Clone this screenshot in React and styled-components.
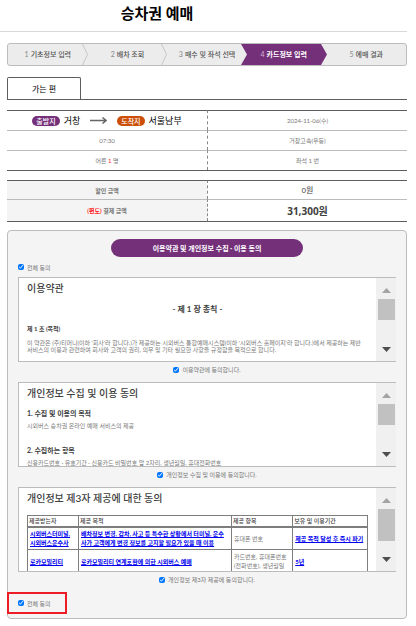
import React, {useRef} from 'react';
import styled, {createGlobalStyle, ThemeProvider} from 'styled-components';

const theme = {
    font: {
        family: 'Lato, "Noto Sans CJK KR", sans-serif',
    },
    color: {
        primary: '#74317a',
        arrival: '#cc4e08',
        dark: '#5d5d5d',
        line: '#bcbcbc',
        panel: '#f4f4f4',
        text: '#404040',
        muted: '#777777',
        link: '#0000ee',
        red: '#ee1c25',
    },
};

const GlobalStyle = createGlobalStyle`
    *{
        box-sizing:border-box;
    }
    body{
        margin:0px;
        background-color:white;
        color:${theme.color.text};
        font-family:${theme.font.family};
        font-size:6px;
        line-height:7px;
    }
    h1, h2, h3, h4, p, ol{
        margin:0px;
        padding:0px;
    }
    button{
        font-family:inherit;
    }
`;

const Page = styled.div`
    padding-right:9px;
`;
const Header = styled.header`
    display:flex;
    justify-content:center;
    padding-right:93px;
    height:32px;
    border-bottom:1px solid #d8d8d8;
`;
const Title = styled.h1`
    color:black;
    font-size:15px;
    line-height:27px;
    font-weight:700;
`;
const Main = styled.main`
    display:flex;
    flex-direction:column;
    padding:11px 0px 7px 7px;
`;

const StepList = styled.ol`
    display:flex;
    height:23px;
    list-style:none;
    overflow:hidden;
    background-color:#ececec;
    border:1px solid ${props => props.theme.color.line};
    border-radius:3px;
`;
const Step = styled.li`
    display:flex;
    flex:none;
    width:18.5%;
    align-items:center;
    justify-content:center;
    gap:2px;
    padding-left:${props => props.$active ? '0px' : '6px'};
    white-space:nowrap;
    font-size:7px;
    font-weight:${props => props.$active ? 700 : 500};
    color:${props => props.$active ? 'white' : '#555555'};
    background-color:${props => props.$active ? props.theme.color.primary : 'transparent'};
    &:last-child{
        flex:1;
        padding-left:0px;
    }
`;
const StepNumber = styled.span`
    font-weight:400;
    color:${props => props.$active ? '#d3b4d6' : '#888888'};
`;
const Chevron = styled.svg`
    flex:none;
    width:6px;
    height:21px;
    background-color:${props => props.$filled ? props.theme.color.primary : 'transparent'};
`;

const TabBar = styled.div`
    display:flex;
    height:23px;
    margin-top:11px;
    border-bottom:1px solid ${props => props.theme.color.dark};
`;
const Tab = styled.button`
    padding:0px 24px;
    font-size:8px;
    color:black;
    background-color:white;
    border:1px solid ${props => props.theme.color.dark};
    border-bottom:none;
    border-radius:2px 2px 0px 0px;
`;

const InfoTable = styled.table`
    width:100%;
    margin-top:10px;
    table-layout:fixed;
    border-collapse:separate;
    border-spacing:0px;
    border-bottom:1px solid ${props => props.theme.color.dark};
    text-align:center;
    & th, & td{
        height:20px;
        padding:0px;
        font-weight:400;
        color:${props => props.theme.color.muted};
        border-top:1px solid ${props => props.theme.color.line};
    }
    & tr:first-child > *{
        border-top-color:${props => props.theme.color.dark};
    }
    & td:last-child{
        border-left:1px dashed #888888;
    }
`;
const FareTable = styled(InfoTable)`
    margin-top:9px;
    & th, & td{
        height:22px;
    }
    & tr:first-child > *{
        height:19px;
    }
`;
const FareHead = styled.th`
    background-color:${props => props.theme.color.panel};
    && {
        font-weight:700;
    }
`;
const Route = styled.div`
    display:flex;
    align-items:center;
    justify-content:center;
    gap:4px;
    font-size:9px;
    line-height:12px;
    color:black;
`;
const Tag = styled.span`
    padding:0px 4px;
    border-radius:5px;
    font-size:7px;
    line-height:10px;
    font-weight:500;
    color:white;
    background-color:${props => props.$arrival ? props.theme.color.arrival : props.theme.color.primary};
`;
const RouteArrow = styled.svg`
    width:17px;
    height:7px;
    margin:0px 6px;
`;
const Red = styled.span`
    color:#ff2020;
`;
const Amount = styled.span`
    font-family:"Open Sans", "Noto Sans CJK KR", sans-serif;
    font-size:${props => props.$total ? '10px' : '8px'};
    line-height:12px;
    font-weight:${props => props.$total ? 700 : 400};
    color:${props => props.theme.color.text};
`;

const Panel = styled.section`
    display:flex;
    flex-direction:column;
    margin-top:8px;
    padding:8px 10px 4px 10px;
    background-color:${props => props.theme.color.panel};
    border:1px solid ${props => props.theme.color.line};
    border-radius:4px;
`;
const PanelTitle = styled.h2`
    align-self:center;
    width:51%;
    border-radius:9px;
    font-size:7px;
    line-height:18px;
    font-weight:700;
    text-align:center;
    color:white;
    background-color:${props => props.theme.color.primary};
`;
const CheckLabel = styled.label`
    display:flex;
    align-items:center;
    gap:3px;
    color:${props => props.theme.color.muted};
`;
const Checkbox = styled.input`
    width:6px;
    height:6px;
    margin:0px;
    accent-color:#0075ff;
`;
const AllRow = styled.div`
    display:flex;
    align-items:center;
    height:20px;
`;
const AgreeRow = styled.div`
    display:flex;
    align-items:center;
    justify-content:center;
    height:15px;
    margin-bottom:5px;
`;
const MarkedRow = styled.div`
    display:flex;
    align-self:flex-start;
    align-items:center;
    height:22px;
    margin-left:-11px;
    padding:0px 14px 0px 9px;
    border:2px solid ${props => props.theme.color.red};
`;

const TermsFrame = styled.div`
    display:flex;
    height:85px;
    background-color:white;
    border:1px solid ${props => props.theme.color.line};
    border-right:none;
`;
const TermsText = styled.div`
    flex:1;
    min-width:0px;
    padding:3px 8px 4px 8px;
    overflow:hidden;
`;
const ScrollTrack = styled.div`
    display:flex;
    flex-direction:column;
    align-items:center;
    width:20px;
    background-color:#f0f0f0;
`;
const ScrollButton = styled.button`
    display:flex;
    align-items:center;
    justify-content:center;
    width:17px;
    height:21px;
    padding:${props => props.$down ? '0px 0px 3px 0px' : '4px 0px 0px 0px'};
    border:none;
    background:none;
    color:${props => props.$down ? '#4f4f4f' : '#a3a3a3'};
`;
const ScrollThumb = styled.div`
    width:17px;
    height:${props => props.$tall ? '32px' : '21px'};
    margin-bottom:auto;
    background-color:#c1c1c1;
`;

const TermsTitle = styled.h3`
    font-size:10px;
    line-height:14px;
    font-weight:500;
`;
const Chapter = styled.h4`
    margin-top:9px;
    font-size:8px;
    line-height:10px;
    font-weight:700;
    text-align:center;
`;
const Clause = styled.h4`
    margin:11px 0px 6px 0px;
    font-size:6px;
    line-height:8px;
    font-weight:700;
`;
const Heading = styled.h4`
    margin:9px 0px 5px 0px;
    font-size:7px;
    line-height:8px;
    font-weight:700;
    p + &{
        margin-top:17px;
    }
`;
const Paragraph = styled.p`
    color:${props => props.theme.color.muted};
    word-break:keep-all;
`;

const ProvisionTable = styled.table`
    width:100%;
    margin-top:10px;
    table-layout:fixed;
    border-collapse:collapse;
    text-align:left;
    line-height:9px;
    white-space:nowrap;
    & th{
        height:11px;
        padding:0px 1px;
        font-weight:500;
        border:1px solid #7d7d7d;
        border-bottom-width:2px;
    }
    & td{
        height:23px;
        padding:1px 2px;
        color:${props => props.theme.color.muted};
        border:1px solid #7d7d7d;
    }
`;
const Strong = styled.a`
    font-weight:700;
    color:${props => props.theme.color.link};
    text-decoration:underline;
`;

const steps = ['기초정보 입력', '배차 조회', '매수 및 좌석 선택', '카드정보 입력', '예매 결과'];
const activeStep = 3;

const StepDivider = ({index}) => {
    const before = index === activeStep - 1;
    const after = index === activeStep;
    return (
        <Chevron viewBox='0 0 6 21' $filled={before} aria-hidden='true'>
            {before || after
                ? <path d='M0 0 L6 10.5 L0 21 Z' fill={after ? theme.color.primary : '#ececec'}/>
                : <path d='M0.5 0 L5.5 10.5 L0.5 21' fill='none' stroke='#c6c6c6'/>
            }
        </Chevron>
    )
}

const Steps = () => (
    <StepList>
        {steps.map((name, index) => <React.Fragment key={name}>
            <Step $active={index === activeStep}>
                <StepNumber $active={index === activeStep}>{index + 1}</StepNumber>
                {name}
            </Step>
            {index < steps.length - 1 && <StepDivider index={index}/>}
        </React.Fragment>)}
    </StepList>
)

const Check = ({label}) => (
    <CheckLabel>
        <Checkbox type='checkbox' defaultChecked/>
        {label}
    </CheckLabel>
)

const Terms = ({children, tall}) => {
    const text = useRef(null);
    const scroll = (step) => text.current.scrollBy(0, step);

    return (
        <TermsFrame>
            <TermsText ref={text}>{children}</TermsText>
            <ScrollTrack>
                <ScrollButton type='button' aria-label='위로' onClick={() => scroll(-20)}>
                    <svg width='9' height='5' viewBox='0 0 9 5'><path d='M4.5 0 L9 5 H0 Z' fill='currentColor'/></svg>
                </ScrollButton>
                <ScrollThumb $tall={tall}/>
                <ScrollButton type='button' $down aria-label='아래로' onClick={() => scroll(20)}>
                    <svg width='9' height='5' viewBox='0 0 9 5'><path d='M0 0 H9 L4.5 5 Z' fill='currentColor'/></svg>
                </ScrollButton>
            </ScrollTrack>
        </TermsFrame>
    )
}

const App = () => {
    return (
        <ThemeProvider theme={theme}>
            <GlobalStyle/>
            <Page>
                <Header>
                    <Title>승차권 예매</Title>
                </Header>
                <Main>
                    <Steps/>
                    <TabBar>
                        <Tab type='button'>가는 편</Tab>
                    </TabBar>

                    <InfoTable>
                        <tbody>
                            <tr>
                                <td>
                                    <Route>
                                        <Tag>출발지</Tag>
                                        거창
                                        <RouteArrow viewBox='0 0 17 7' aria-hidden='true'>
                                            <path d='M0 3.5 H16 M12.5 0.5 L16 3.5 L12.5 6.5' fill='none' stroke='#666666' strokeWidth='1.5'/>
                                        </RouteArrow>
                                        <Tag $arrival>도착지</Tag>
                                        서울남부
                                    </Route>
                                </td>
                                <td>2024-11-06(수)</td>
                            </tr>
                            <tr>
                                <td>07:30</td>
                                <td>거창고속(우등)</td>
                            </tr>
                            <tr>
                                <td>어른 <Red>1</Red> 명</td>
                                <td>좌석 1 번</td>
                            </tr>
                        </tbody>
                    </InfoTable>

                    <FareTable>
                        <tbody>
                            <tr>
                                <FareHead scope='row'>할인 금액</FareHead>
                                <td><Amount>0원</Amount></td>
                            </tr>
                            <tr>
                                <FareHead scope='row'><Red>(편도)</Red> 결제 금액</FareHead>
                                <td><Amount $total>31,300원</Amount></td>
                            </tr>
                        </tbody>
                    </FareTable>

                    <Panel>
                        <PanelTitle>이용약관 및 개인정보 수집 · 이용 동의</PanelTitle>
                        <AllRow><Check label='전체 동의'/></AllRow>

                        <Terms>
                            <TermsTitle>이용약관</TermsTitle>
                            <Chapter>- 제 1 장 총칙 -</Chapter>
                            <Clause>제 1 조 (목적)</Clause>
                            <Paragraph>
                                이 약관은 (주)티머니(이하 '회사'라 합니다.)가 제공하는 시외버스 통합예매시스템(이하 '시외버스 홈페이지'라 합니다.)에서 제공하는 제반 서비스의
                                이용과 관련하여 회사와 고객의 권리, 의무 및 기타 필요한 사항을 규정함을 목적으로 합니다.
                            </Paragraph>
                        </Terms>
                        <AgreeRow><Check label='이용약관에 동의합니다.'/></AgreeRow>

                        <Terms>
                            <TermsTitle>개인정보 수집 및 이용 동의</TermsTitle>
                            <Heading>1. 수집 및 이용의 목적</Heading>
                            <Paragraph>시외버스 승차권 온라인 예매 서비스의 제공</Paragraph>
                            <Heading>2. 수집하는 항목</Heading>
                            <Paragraph>신용카드번호 · 유효기간 · 신용카드 비밀번호 앞 2자리, 생년월일, 휴대전화번호</Paragraph>
                        </Terms>
                        <AgreeRow><Check label='개인정보 수집 및 이용에 동의합니다.'/></AgreeRow>

                        <Terms tall>
                            <TermsTitle>개인정보 제3자 제공에 대한 동의</TermsTitle>
                            <ProvisionTable>
                                <colgroup>
                                    <col width='15%'/>
                                    <col width='45%'/>
                                    <col width='18%'/>
                                    <col width='22%'/>
                                </colgroup>
                                <thead>
                                    <tr>
                                        <th>제공받는자</th>
                                        <th>제공 목적</th>
                                        <th>제공 항목</th>
                                        <th>보유 및 이용기간</th>
                                    </tr>
                                </thead>
                                <tbody>
                                    <tr>
                                        <td><Strong href='#terminal'>시외버스터미널,<br/>시외버스운수사</Strong></td>
                                        <td><Strong href='#terminal'>배차정보 변경, 감차, 사고 등 특수한 상황에서 터미널, 운수<br/>사가 고객에게 변경 정보를 고지할 필요가 있을 때 이용</Strong></td>
                                        <td>휴대폰 번호</td>
                                        <td><Strong href='#terminal'>제공 목적 달성 후 즉시 파기</Strong></td>
                                    </tr>
                                    <tr>
                                        <td><Strong href='#mobility'>로카모빌리티</Strong></td>
                                        <td><Strong href='#mobility'>로카모빌리티 연계호환에 의한 시외버스 예매</Strong></td>
                                        <td>카드번호, 휴대폰번호<br/>(전화번호), 생년월일</td>
                                        <td><Strong href='#mobility'>5년</Strong></td>
                                    </tr>
                                </tbody>
                            </ProvisionTable>
                        </Terms>
                        <AgreeRow><Check label='개인정보 제3자 제공에 동의합니다.'/></AgreeRow>

                        <MarkedRow><Check label='전체 동의'/></MarkedRow>
                    </Panel>
                </Main>
            </Page>
        </ThemeProvider>
    )
}


export default App;
